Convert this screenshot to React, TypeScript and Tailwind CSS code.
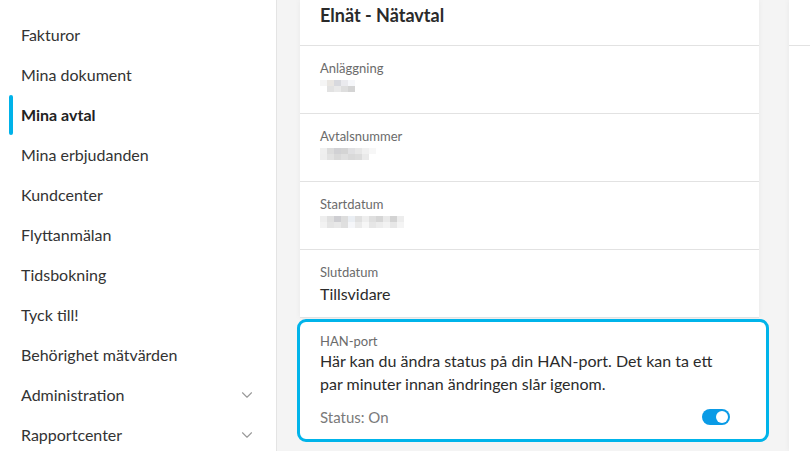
import { ChevronDown } from "lucide-react";

const navItems = [
  { label: "Fakturor" },
  { label: "Mina dokument" },
  { label: "Mina avtal", active: true },
  { label: "Mina erbjudanden" },
  { label: "Kundcenter" },
  { label: "Flyttanmälan" },
  { label: "Tidsbokning" },
  { label: "Tyck till!" },
  { label: "Behörighet mätvärden" },
  { label: "Administration", sub: true },
  { label: "Rapportcenter", sub: true },
];

// pixelated placeholder for hidden values
const Blur = ({ cells, rows = 2 }: { cells: string[][]; rows?: number }) => (
  <div className="flex flex-col opacity-80">
    {cells.slice(0, rows).map((row, i) => (
      <div key={i} className="flex">
        {row.map((c, j) => (
          <div key={j} className="w-[7px] h-[6px]" style={{ backgroundColor: c }} />
        ))}
      </div>
    ))}
  </div>
);

const Row = ({ label, children }: { label: string; children: React.ReactNode }) => (
  <div className="h-[68px] border-b border-[#e2e2e2] px-[20px] pt-[14px]">
    <div className="text-[13px] text-[#6b6b6b] leading-[16px]">{label}</div>
    <div className="mt-[4px]">{children}</div>
  </div>
);

const App = () => {
  return (
    <div
      className="flex h-[451px] w-[810px] overflow-hidden bg-[#f4f4f4] text-[#2b2b2b]"
      style={{ fontFamily: "Lato, 'Open Sans', sans-serif" }}
    >
      <aside className="w-[277px] shrink-0 bg-white border-r border-[#e4e4e4] pt-[15px]">
        {navItems.map((item) => (
          <div key={item.label} className="relative flex items-center h-[40px] pl-[21px] pr-[20px]">
            {item.active && (
              <div className="absolute left-[9px] top-[0px] h-[40px] w-[4px] rounded-full bg-[#00b2e9]" />
            )}
            <span className={`text-[16px] flex-grow ${item.active ? "font-bold text-[#222]" : "text-[#333]"}`}>
              {item.label}
            </span>
            {item.sub && <ChevronDown size={18} strokeWidth={1.5} className="text-[#9a9a9a]" />}
          </div>
        ))}
      </aside>

      <main className="flex-grow flex pl-[23px]">
        <div className="w-[459px] shrink-0 flex flex-col">
          <div className="bg-white shadow-[0_0_6px_rgba(0,0,0,0.05)]">
            <div className="h-[46px] border-b border-[#e2e2e2] px-[20px] pt-[2px]">
              <h2 className="text-[18px] font-bold text-[#2a2a2a] leading-[26px]">Elnät - Nätavtal</h2>
            </div>
            <Row label="Anläggning">
              <Blur
                cells={[
                  ["#f3f3f3", "#e4e0dc", "#cfd0d6", "#e6e6ea", "#f5f6f9", "#fff"],
                  ["#fff", "#dcdcdc", "#e4e4e4", "#d6d6d6", "#cacaca", "#fff"],
                ]}
              />
            </Row>
            <Row label="Avtalsnummer">
              <Blur
                cells={[
                  ["#ececec", "#d4d4d4", "#c6c6ca", "#cacaca", "#d9d9db", "#e2e2e2", "#ededed", "#f6f6f6"],
                  ["#eaeaea", "#dcdcdc", "#d0d0d0", "#d8d8d8", "#d0d0d0", "#d4d4d4", "#e6e6e6", "#fff"],
                ]}
              />
            </Row>
            <Row label="Startdatum">
              <Blur
                cells={[
                  ["#ebebeb", "#d9d9d9", "#c2c2c8", "#d5d5d5", "#e6ebf1", "#d9d9d9", "#eaeaea", "#d8d8d8", "#cdcdcd", "#e4e4e4", "#c9c9c9", "#e9e9e9"],
                  ["#f0f0f0", "#dedede", "#e3e3e3", "#d8d8d8", "#f3f5f8", "#e5e5e5", "#f4f4f4", "#e0e0e0", "#e8e8e8", "#f0f0f0", "#e2e2e2", "#f2f2f2"],
                ]}
              />
            </Row>
            <Row label="Slutdatum">
              <div className="text-[16px] text-[#2b2b2b] leading-[20px]">Tillsvidare</div>
            </Row>
          </div>

          <div className="ml-[-3px] mr-[-10px] mt-[1px] h-[123px] rounded-[9px] border-[3px] border-[#00b4ea] bg-white px-[20px] pt-[11px]">
            <div className="text-[13px] text-[#6b6b6b] leading-[16px]">HAN-port</div>
            <p className="mt-[0px] text-[16px] text-[#2b2b2b] leading-[23px] pr-[20px]">
              Här kan du ändra status på din HAN-port. Det kan ta ett par minuter innan ändringen slår igenom.
            </p>
            <div className="mt-[11px] flex items-center justify-between pr-[16px]">
              <span className="text-[15px] text-[#7a7a7a]">Status: On</span>
              <div className="relative h-[16px] w-[28px] rounded-full bg-[#0a9be6]">
                <div className="absolute right-[2px] top-[2px] h-[12px] w-[12px] rounded-full bg-white" />
              </div>
            </div>
          </div>
        </div>

        <div className="ml-[30px] flex-grow bg-white shadow-[0_0_6px_rgba(0,0,0,0.05)]">
          <div className="h-[46px] border-b border-[#e2e2e2]" />
        </div>
      </main>
    </div>
  );
};

export default App;
